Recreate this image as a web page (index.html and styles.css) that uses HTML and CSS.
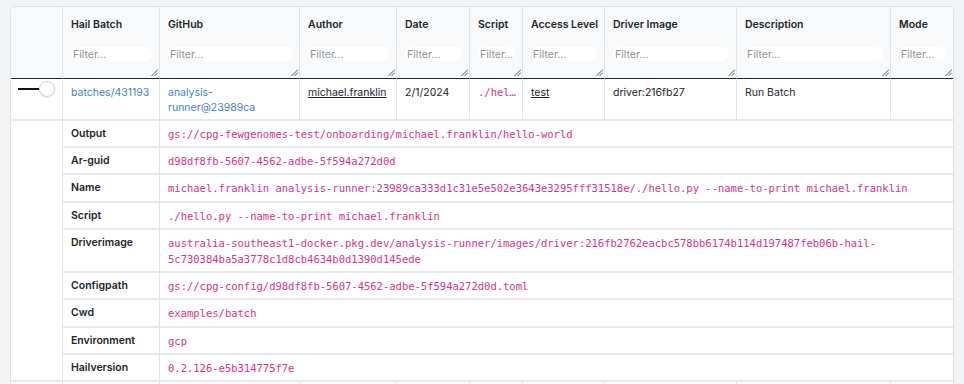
FILE: index.html
```html
<!DOCTYPE html>
<html lang="en">
<head>
<meta charset="utf-8">
<title>Batches</title>
<link rel="stylesheet" href="styles.css">
</head>
<body>
<div class="wrap">
  <table class="grid">
    <thead>
      <tr>
        <th class="w1"></th>
        <th class="w2"><div class="head"><span class="lbl">Hail Batch</span><input class="filter" placeholder="Filter..."><span class="grip"><svg width="7" height="7" viewBox="0 0 7 7"><path d="M0.5 7 L7 0.5 M3.5 7 L7 3.5" stroke="#444" stroke-width="0.9" fill="none"/></svg></span></div></th>
        <th class="w3"><div class="head"><span class="lbl">GitHub</span><input class="filter" placeholder="Filter..."><span class="grip"><svg width="7" height="7" viewBox="0 0 7 7"><path d="M0.5 7 L7 0.5 M3.5 7 L7 3.5" stroke="#444" stroke-width="0.9" fill="none"/></svg></span></div></th>
        <th class="w4"><div class="head"><span class="lbl">Author</span><input class="filter" placeholder="Filter..."><span class="grip"><svg width="7" height="7" viewBox="0 0 7 7"><path d="M0.5 7 L7 0.5 M3.5 7 L7 3.5" stroke="#444" stroke-width="0.9" fill="none"/></svg></span></div></th>
        <th class="w5"><div class="head"><span class="lbl">Date</span><input class="filter" placeholder="Filter..."><span class="grip"><svg width="7" height="7" viewBox="0 0 7 7"><path d="M0.5 7 L7 0.5 M3.5 7 L7 3.5" stroke="#444" stroke-width="0.9" fill="none"/></svg></span></div></th>
        <th class="w6"><div class="head"><span class="lbl">Script</span><input class="filter" placeholder="Filter..."><span class="grip"><svg width="7" height="7" viewBox="0 0 7 7"><path d="M0.5 7 L7 0.5 M3.5 7 L7 3.5" stroke="#444" stroke-width="0.9" fill="none"/></svg></span></div></th>
        <th class="w7"><div class="head"><span class="lbl">Access Level</span><input class="filter" placeholder="Filter..."><span class="grip"><svg width="7" height="7" viewBox="0 0 7 7"><path d="M0.5 7 L7 0.5 M3.5 7 L7 3.5" stroke="#444" stroke-width="0.9" fill="none"/></svg></span></div></th>
        <th class="w8"><div class="head"><span class="lbl">Driver Image</span><input class="filter" placeholder="Filter..."><span class="grip"><svg width="7" height="7" viewBox="0 0 7 7"><path d="M0.5 7 L7 0.5 M3.5 7 L7 3.5" stroke="#444" stroke-width="0.9" fill="none"/></svg></span></div></th>
        <th class="w9"><div class="head"><span class="lbl">Description</span><input class="filter" placeholder="Filter..."><span class="grip"><svg width="7" height="7" viewBox="0 0 7 7"><path d="M0.5 7 L7 0.5 M3.5 7 L7 3.5" stroke="#444" stroke-width="0.9" fill="none"/></svg></span></div></th>
        <th class="w10"><div class="head"><span class="lbl">Mode</span><input class="filter" placeholder="Filter..."><span class="grip"><svg width="7" height="7" viewBox="0 0 7 7"><path d="M0.5 7 L7 0.5 M3.5 7 L7 3.5" stroke="#444" stroke-width="0.9" fill="none"/></svg></span></div></th>
      </tr>
    </thead>
    <tbody>
      <tr class="row">
        <td class="toggle-cell"><span class="toggle"><span class="bar"></span><span class="knob"></span></span></td>
        <td><a class="lnk" href="#">batches/431193</a></td>
        <td><a class="lnk" href="#">analysis-runner@23989ca</a></td>
        <td><a class="ul" href="#">michael.franklin</a></td>
        <td>2/1/2024</td>
        <td class="script-cell"><code class="trunc">./hello.py --name-to-print michael.franklin</code></td>
        <td><a class="ul" href="#">test</a></td>
        <td>driver:216fb27</td>
        <td>Run Batch</td>
        <td></td>
      </tr>
      <tr class="expand">
        <td class="spacer"></td>
        <td class="nest" colspan="9">
          <table class="kv">
            <tr><td class="key">Output</td><td class="val"><code>gs://cpg-fewgenomes-test/onboarding/michael.franklin/hello-world</code></td></tr>
            <tr><td class="key">Ar-guid</td><td class="val"><code>d98df8fb-5607-4562-adbe-5f594a272d0d</code></td></tr>
            <tr><td class="key">Name</td><td class="val"><code>michael.franklin analysis-runner:23989ca333d1c31e5e502e3643e3295fff31518e/./hello.py --name-to-print michael.franklin</code></td></tr>
            <tr><td class="key">Script</td><td class="val"><code>./hello.py --name-to-print michael.franklin</code></td></tr>
            <tr><td class="key">Driverimage</td><td class="val"><code>australia-southeast1-docker.pkg.dev/analysis-runner/images/driver:216fb2762eacbc578bb6174b114d197487feb06b-hail-<wbr>5c730384ba5a3778c1d8cb4634b0d1390d145ede</code></td></tr>
            <tr><td class="key">Configpath</td><td class="val"><code>gs://cpg-config/d98df8fb-5607-4562-adbe-5f594a272d0d.toml</code></td></tr>
            <tr><td class="key">Cwd</td><td class="val"><code>examples/batch</code></td></tr>
            <tr><td class="key">Environment</td><td class="val"><code>gcp</code></td></tr>
            <tr><td class="key">Hailversion</td><td class="val"><code>0.2.126-e5b314775f7e</code></td></tr>
          </table>
        </td>
      </tr>
      <tr class="row">
        <td>&nbsp;</td><td></td><td></td><td></td><td></td><td></td><td></td><td></td><td></td><td></td>
      </tr>
    </tbody>
  </table>
</div>
</body>
</html>
```
FILE: styles.css
```css
* { box-sizing: border-box; }

html, body {
  margin: 0;
  background: #f3f4f6;
  overflow: hidden;
}

body {
  font-family: Inter, "Liberation Sans", sans-serif;
  font-size: 10.5px;
  color: #212529;
}

.wrap {
  margin: 6px 0 0 10px;
  width: 944px;
  border: 1px solid #dee2e6;
  border-bottom: none;
  border-radius: 5px 5px 0 0;
  background: #fff;
  overflow: hidden;
}

.grid {
  width: 942px;
  border-collapse: separate;
  border-spacing: 0;
  table-layout: fixed;
}

.w1 { width: 52px; }
.w2 { width: 97px; }
.w3 { width: 140px; }
.w4 { width: 97px; }
.w5 { width: 73px; }
.w6 { width: 53px; }
.w7 { width: 82px; }
.w8 { width: 132px; }
.w9 { width: 154px; }
.w10 { width: 62px; }

.grid th {
  background: #f8f9fa;
  border-right: 1px solid #e1e4e8;
  border-bottom: 1px solid #212529;
  padding: 0;
  vertical-align: top;
  text-align: left;
}

.grid th:last-child { border-right: none; }

.head {
  display: flex;
  flex-direction: column;
  padding: 10px 7px 0 8px;
  height: 71px;
}

.lbl {
  font-weight: 600;
  line-height: 15px;
  height: 15px;
  white-space: nowrap;
}

.filter {
  margin-top: 15px;
  height: 14px;
  width: 100%;
  border: none;
  border-radius: 7px;
  background: #fff;
  padding: 0 2px;
  font-family: inherit;
  font-size: 10.5px;
  color: #212529;
  outline: none;
}

.filter::placeholder { color: #8d9297; }

.grip {
  align-self: flex-end;
  margin-top: 8px;
  margin-right: -6px;
  width: 7px;
  height: 7px;
  display: flex;
}

.row td {
  padding: 6px 8px 4px;
  line-height: 15px;
  border-right: 1px solid #e1e4e8;
  border-bottom: 2px solid #e6e8eb;
  vertical-align: top;
  white-space: normal;
}

.row td:last-child { border-right: none; }

.toggle-cell { padding: 2px 0 0 7px !important; }

.toggle {
  display: flex;
  align-items: center;
}

.bar {
  width: 22px;
  height: 2px;
  background: #111;
}

.knob {
  width: 16px;
  height: 16px;
  margin-left: -1px;
  border-radius: 50%;
  border: 1px solid #cfd2d6;
  background: #fff;
  box-shadow: 0 1px 2px rgba(0, 0, 0, 0.08);
}

.lnk {
  color: #4183c4;
  text-decoration: none;
}

.ul {
  color: #212529;
  text-decoration: underline;
}

code {
  font-family: "DejaVu Sans Mono", "Liberation Mono", monospace;
  font-size: 10.5px;
  color: #d63384;
}

.script-cell { padding-right: 5px !important; }

.trunc {
  display: block;
  white-space: nowrap;
  overflow: hidden;
  text-overflow: ellipsis;
  line-height: 15px;
}

.expand td.spacer {
  border-right: 1px solid #e1e4e8;
  border-bottom: 2px solid #e6e8eb;
  padding: 0;
}

.expand td.nest {
  padding: 0;
  border-bottom: 2px solid #e6e8eb;
}

.kv {
  width: 100%;
  border-collapse: separate;
  border-spacing: 0;
  table-layout: fixed;
}

.kv td {
  padding: 5px 8px 4px;
  line-height: 16.2px;
  border-bottom: 2px solid #e6e8eb;
  vertical-align: top;
}

.kv tr:last-child td { border-bottom: none; }

.kv .key {
  width: 97px;
  font-weight: 600;
  border-right: 1px solid #e1e4e8;
}

.kv .val code {
  display: block;
  line-height: 16.2px;
}
```
